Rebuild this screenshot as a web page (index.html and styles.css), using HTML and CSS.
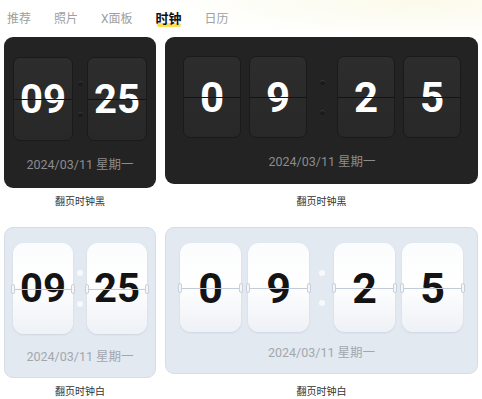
FILE: index.html
```html
<!DOCTYPE html>
<html lang="zh">
<head>
<meta charset="UTF-8">
<meta name="viewport" content="width=device-width, initial-scale=1.0">
<title>时钟</title>
<link rel="stylesheet" href="styles.css">
</head>
<body>
  <div class="tabs">
    <span class="tab">推荐</span>
    <span class="tab">照片</span>
    <span class="tab">X面板</span>
    <span class="tab active">时钟</span>
    <span class="tab">日历</span>
  </div>

  <div class="grid">
    <div class="cell">
      <div class="card dark small">
        <div class="tiles">
          <div class="tile">09</div>
          <div class="colon"><i></i><i></i></div>
          <div class="tile">25</div>
        </div>
        <div class="date">2024/03/11 星期一</div>
      </div>
      <div class="label">翻页时钟黑</div>
    </div>

    <div class="cell">
      <div class="card dark wide">
        <div class="tiles">
          <div class="pair">
            <div class="tile">0</div>
            <div class="tile">9</div>
          </div>
          <div class="colon"><i></i><i></i></div>
          <div class="pair">
            <div class="tile">2</div>
            <div class="tile">5</div>
          </div>
        </div>
        <div class="date">2024/03/11 星期一</div>
      </div>
      <div class="label">翻页时钟黑</div>
    </div>

    <div class="cell">
      <div class="card light small">
        <div class="tiles">
          <div class="tile">09<b class="hinge left"></b><b class="hinge right"></b></div>
          <div class="colon"><i></i><i></i></div>
          <div class="tile">25<b class="hinge left"></b><b class="hinge right"></b></div>
        </div>
        <div class="date">2024/03/11 星期一</div>
      </div>
      <div class="label">翻页时钟白</div>
    </div>

    <div class="cell">
      <div class="card light wide">
        <div class="tiles">
          <div class="pair">
            <div class="tile">0<b class="hinge left"></b><b class="hinge right"></b></div>
            <div class="tile">9<b class="hinge left"></b><b class="hinge right"></b></div>
          </div>
          <div class="colon"><i></i><i></i></div>
          <div class="pair">
            <div class="tile">2<b class="hinge left"></b><b class="hinge right"></b></div>
            <div class="tile">5<b class="hinge left"></b><b class="hinge right"></b></div>
          </div>
        </div>
        <div class="date">2024/03/11 星期一</div>
      </div>
      <div class="label">翻页时钟白</div>
    </div>
  </div>
</body>
</html>
```

FILE: styles.css
```css
body {
  font-family: Roboto, "Noto Sans CJK SC", sans-serif;
  margin: 0;
  padding: 0;
  background: #fff;
  color: #222;
}

.tabs {
  display: flex;
  align-items: center;
  gap: 23px;
  height: 37px;
  padding: 0 0 0 7px;
  box-sizing: border-box;
  background: radial-gradient(ellipse 260px 40px at 420px 0, #fbfaea, #fff);
}

.tab {
  font-size: 12px;
  line-height: 16px;
  color: #a0a0a0;
  margin-top: 1px;
}

.tab.active {
  position: relative;
  isolation: isolate;
  font-size: 13px;
  font-weight: bold;
  color: #111;
}

.tab.active::after {
  content: "";
  position: absolute;
  left: 1px;
  right: 1px;
  bottom: 0;
  height: 4px;
  border-radius: 2px;
  background: rgba(255, 214, 40, 0.8);
  z-index: -1;
}

.grid {
  display: grid;
  grid-template-columns: 152px 313px;
  column-gap: 9px;
  row-gap: 19px;
  padding: 0 4px;
}

.cell {
  display: flex;
  flex-direction: column;
}

.label {
  margin-top: auto;
  padding-top: 8px;
  font-size: 10px;
  line-height: 12px;
  text-align: center;
  color: #333;
}

.card {
  box-sizing: border-box;
  border-radius: 9px;
  display: flex;
  flex-direction: column;
}

.card.small {
  height: 151px;
}

.card.wide {
  height: 147px;
}

.card.dark {
  background: #232323;
}

.card.light {
  background: #e3e9f1;
  border: 1px solid #d6dde7;
}

.tiles {
  display: flex;
}

.pair {
  display: flex;
}

.tile {
  position: relative;
  display: flex;
  align-items: center;
  justify-content: center;
  box-sizing: border-box;
  font-weight: bold;
  font-size: 40px;
}

.colon {
  display: flex;
  flex-direction: column;
  align-items: center;
  justify-content: center;
}

.colon i {
  display: block;
  border-radius: 50%;
}

.date {
  text-align: center;
  font-size: 12.5px;
  line-height: 14px;
}

/* dark */
.dark .tile {
  background: linear-gradient(#2d2d2d, #282828);
  border: 1px solid #1a1a1a;
  border-radius: 7px;
  color: #fff;
}

.dark .tile::after {
  content: "";
  position: absolute;
  left: 0;
  right: 0;
  top: 50%;
  height: 1px;
  background: #141414;
}

.dark .colon i {
  width: 5px;
  height: 5px;
  background: #1a1a1a;
  box-shadow: inset 0 1px 0 #3a3a3a;
}

.dark .date {
  color: #8c8c8c;
}

/* light */
.light .tile {
  background: linear-gradient(#fbfcfd, #ffffff 45%, #eef1f6);
  border-radius: 11px;
  box-shadow: 0 1px 2px rgba(140, 155, 180, 0.25);
  color: #141414;
}

.light .tile::after {
  content: "";
  position: absolute;
  left: 0;
  right: 0;
  top: 50%;
  height: 1px;
  background: #c3cbd8;
}

.hinge {
  position: absolute;
  top: 50%;
  width: 4px;
  height: 10px;
  margin-top: -5px;
  box-sizing: border-box;
  border: 1px solid #c9d0da;
  border-radius: 2px;
  background: #f4f6f9;
  z-index: 1;
}

.hinge.left {
  left: -2px;
}

.hinge.right {
  right: -2px;
}

.light .colon i {
  width: 6px;
  height: 6px;
  background: #f7f9fb;
}

.light .date {
  color: #a2a7ae;
}

/* sizes */
.dark.small {
  padding: 20px 9px 0;
}

.dark.small .tile {
  width: 60px;
  height: 84px;
}

.dark.small .colon {
  width: 14px;
  gap: 26px;
}

.dark.small .date {
  margin-top: 17px;
}

.dark.wide {
  padding: 19px 17px 0 18px;
}

.dark.wide .pair {
  gap: 8px;
}

.dark.wide .tile {
  width: 58px;
  height: 82px;
  font-size: 42px;
}

.dark.wide .colon {
  width: 33px;
  gap: 25px;
}

.dark.wide .date {
  margin-top: 17px;
}

.light.small {
  padding: 15px 8px 0;
}

.light.small .tile {
  width: 60px;
  height: 91px;
}

.light.small .colon {
  width: 14px;
  gap: 25px;
}

.light.small .date {
  margin-top: 16px;
}

.light.wide {
  padding: 15px 14px 0 14px;
}

.light.wide .pair {
  gap: 7px;
}

.light.wide .tile {
  width: 61px;
  height: 89px;
  font-size: 43px;
}

.light.wide .colon {
  width: 25px;
  gap: 24px;
}

.light.wide .date {
  margin-top: 14px;
}
```
